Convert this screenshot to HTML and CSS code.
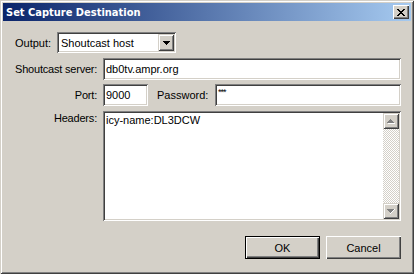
FILE: index.html
```html
<!DOCTYPE html>
<html>
<head>
<meta charset="utf-8">
<link rel="stylesheet" href="styles.css">
</head>
<body>
<div class="window">
  <div class="titlebar">
    <span class="title">Set Capture Destination</span>
    <span class="close"><svg width="8" height="7" viewBox="0 0 8 7"><path d="M0 0h2v1h1v1h2v-1h1v-1h2v1h-1v1h-1v1h-1v1h1v1h1v1h1v1h-2v-1h-1v-1h-2v1h-1v1h-2v-1h1v-1h1v-1h1v-1h-1v-1h-1v-1h-1z" fill="#000"/></svg></span>
  </div>
  <div class="body">
    <div class="row-output">
      <span class="lbl-output">Output:</span>
      <div class="select">
        <span class="sel-text">Shoutcast host</span>
        <span class="drop"><svg width="7" height="4" viewBox="0 0 7 4"><path d="M0 0h7v1h-1v1h-1v1h-1v1h-1v-1h-1v-1h-1v-1h-1z" fill="#000"/></svg></span>
      </div>
    </div>
    <div class="grid">
      <span class="lbl">Shoutcast server:</span>
      <div class="field">db0tv.ampr.org</div>
      <span class="lbl">Port:</span>
      <div class="port-row">
        <div class="field port">9000</div>
        <span class="lbl-pwd">Password:</span>
        <div class="field pwd">***</div>
      </div>
      <span class="lbl lbl-top">Headers:</span>
      <div class="field area">
        <div class="area-text">icy-name:DL3DCW</div>
        <div class="scrollbar">
          <div class="sbtn"><svg width="8" height="5" viewBox="0 0 8 5"><path d="M3 0h1v1h1v1h1v1h1v1h-7v-1h1v-1h1v-1h1z" fill="#808080"/><path d="M1 4h7v1h-7z" fill="#fff"/></svg></div>
          <div class="track"></div>
          <div class="sbtn"><svg width="8" height="5" viewBox="0 0 8 5"><path d="M0 0h7v1h-1v1h-1v1h-1v1h-1v-1h-1v-1h-1v-1h-1z" fill="#808080"/><path d="M7 0h1v1h-1v1h-1v1h-1v1h-1v1h-1v-1h1v-1h1v-1h1v-1h1z" fill="#fff"/></svg></div>
        </div>
      </div>
    </div>
    <div class="buttons">
      <div class="btn default"><span>OK</span></div>
      <div class="btn"><span>Cancel</span></div>
    </div>
  </div>
</div>
</body>
</html>
```

FILE: styles.css
```css
html, body {
  margin: 0;
  padding: 0;
  background: #d4d0c8;
}
body {
  font-family: "Liberation Sans", Arial, sans-serif;
  font-size: 11px;
  color: #000;
  white-space: nowrap;
}
.window {
  width: 414px;
  height: 274px;
  box-sizing: border-box;
  padding: 3px;
  background: #d4d0c8;
  box-shadow: inset 1px 1px #d4d0c8, inset -1px -1px #404040, inset 2px 2px #ffffff, inset -2px -2px #808080;
  display: flex;
  flex-direction: column;
}
.titlebar {
  height: 18px;
  background: linear-gradient(to right, #0a246a, #a6caf0);
  display: flex;
  align-items: center;
  justify-content: space-between;
  padding: 0 2px 0 3px;
}
.title {
  color: #fff;
  font-weight: bold;
  font-size: 11px;
  font-family: "DejaVu Sans Condensed", "Liberation Sans", sans-serif;
}
.close {
  width: 16px;
  height: 14px;
  box-sizing: border-box;
  background: #d4d0c8;
  box-shadow: inset 1px 1px #ffffff, inset -1px -1px #404040, inset -2px -2px #808080;
  display: flex;
  align-items: center;
  justify-content: center;
}
.body {
  flex: 1;
  padding: 11px 10px 0 12px;
  display: flex;
  flex-direction: column;
}
.row-output {
  display: flex;
  align-items: center;
  height: 21px;
}
.lbl-output {
  width: 42px;
}
.select {
  width: 119px;
  height: 21px;
  box-sizing: border-box;
  background: #fff;
  box-shadow: inset 1px 1px #808080, inset -1px -1px #ffffff, inset 2px 2px #404040, inset -2px -2px #d4d0c8;
  display: flex;
  align-items: center;
  justify-content: space-between;
  padding: 2px;
}
.sel-text {
  padding-left: 2px;
}
.drop {
  width: 16px;
  height: 17px;
  box-sizing: border-box;
  background: #d4d0c8;
  box-shadow: inset 1px 1px #d4d0c8, inset -1px -1px #404040, inset 2px 2px #ffffff, inset -2px -2px #808080;
  display: flex;
  align-items: center;
  justify-content: center;
}
.grid {
  margin-top: 5px;
  display: grid;
  grid-template-columns: 82px 1fr;
  column-gap: 6px;
  row-gap: 4px;
  grid-template-rows: 22px 22px 110px;
}
.lbl {
  text-align: right;
  align-self: center;
  letter-spacing: -0.2px;
}
.lbl-top {
  align-self: start;
  margin-top: 2px;
}
.field {
  background: #fff;
  box-sizing: border-box;
  box-shadow: inset 1px 1px #808080, inset -1px -1px #ffffff, inset 2px 2px #404040, inset -2px -2px #d4d0c8;
  padding: 0 3px;
  display: flex;
  align-items: center;
  height: 22px;
}
.port-row {
  display: flex;
  align-items: center;
}
.port {
  width: 45px;
}
.lbl-pwd {
  margin-left: 9px;
  width: 58px;
}
.pwd {
  flex: 1;
  align-items: flex-start;
  padding-top: 3px;
  font-size: 9px;
  letter-spacing: -1px;
}
.area {
  height: 110px;
  margin-top: 1px;
  align-items: stretch;
  padding: 2px;
}
.area-text {
  flex: 1;
  padding-left: 1px;
  line-height: 14px;
}
.scrollbar {
  width: 16px;
  display: flex;
  flex-direction: column;
}
.sbtn {
  height: 16px;
  box-sizing: border-box;
  background: #d4d0c8;
  box-shadow: inset 1px 1px #d4d0c8, inset -1px -1px #404040, inset 2px 2px #ffffff, inset -2px -2px #808080;
  display: flex;
  align-items: center;
  justify-content: center;
}
.track {
  flex: 1;
  background: repeating-conic-gradient(#ffffff 0 25%, #d4d0c8 0 50%) 0 0 / 2px 2px;
}
.buttons {
  margin-top: 16px;
  display: flex;
  justify-content: flex-end;
  gap: 6px;
}
.btn {
  width: 75px;
  height: 23px;
  box-sizing: border-box;
  background: #d4d0c8;
  box-shadow: inset 1px 1px #ffffff, inset -1px -1px #404040, inset -2px -2px #808080;
  display: flex;
  align-items: center;
  justify-content: center;
}
.btn.default {
  box-shadow: inset 1px 1px #000, inset -1px -1px #000, inset 2px 2px #ffffff, inset -2px -2px #404040, inset -3px -3px #808080;
}
```
